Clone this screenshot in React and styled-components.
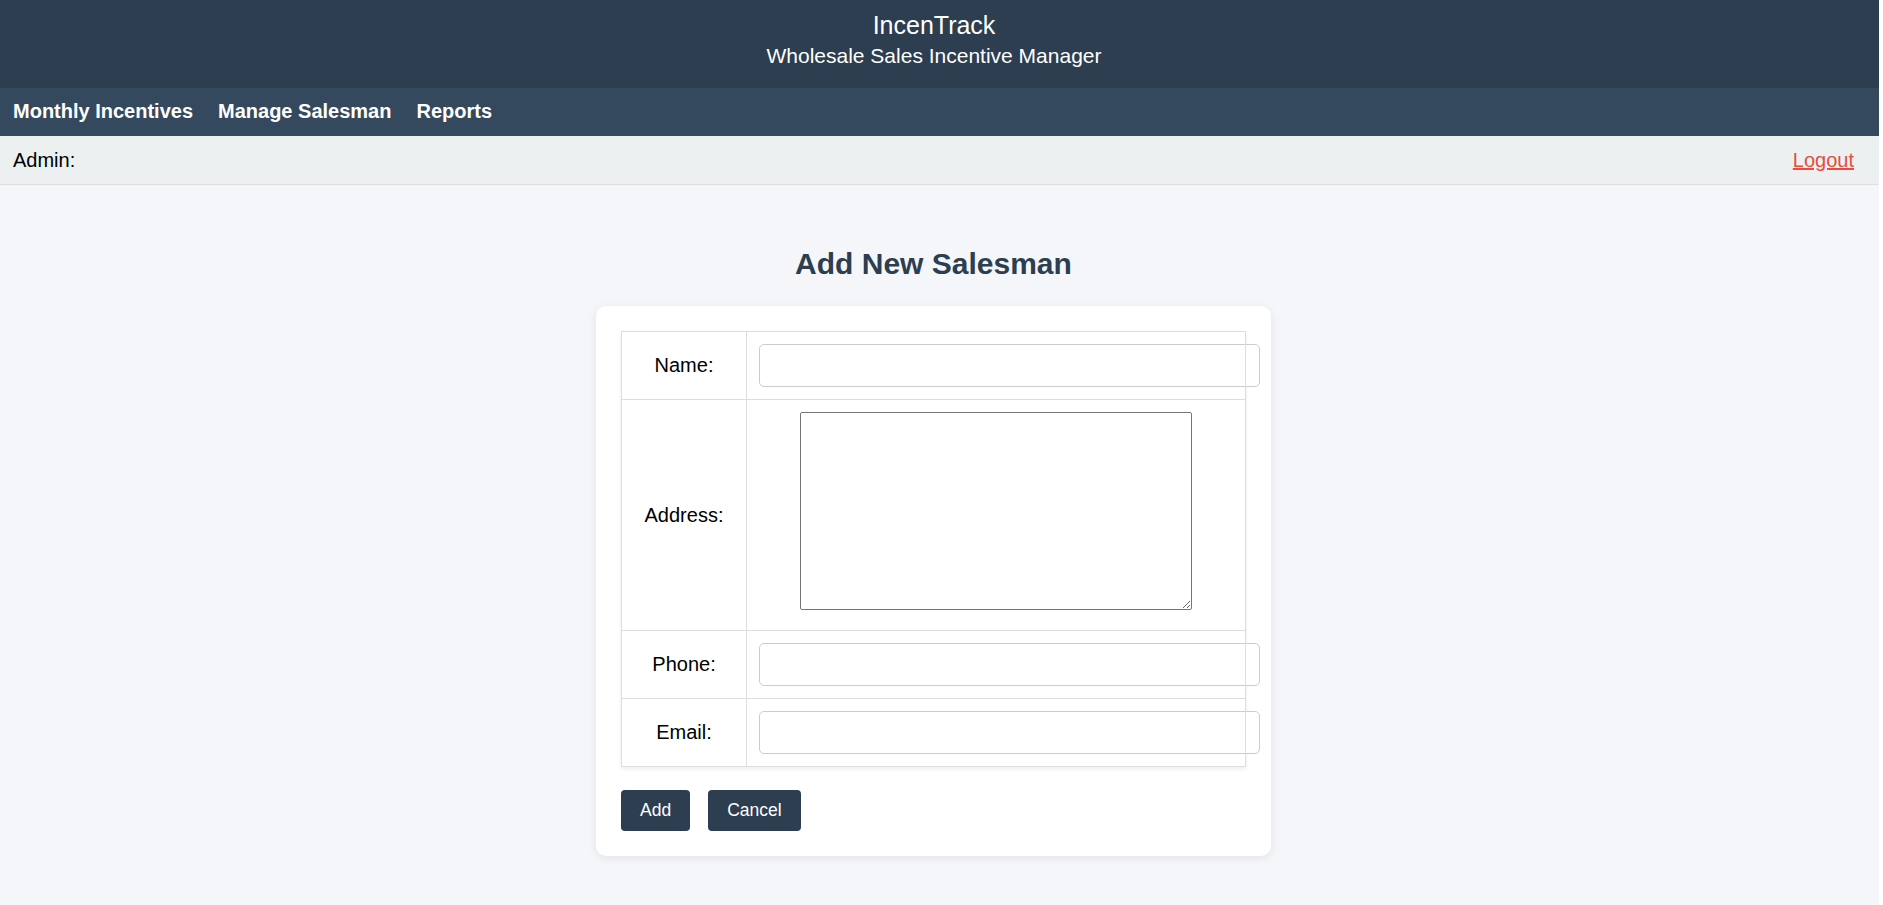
import React from "react";
import styled, { createGlobalStyle } from "styled-components";

const GlobalStyle = createGlobalStyle`
  html, body {
    margin: 0;
    padding: 0;
    background: #ffffff;
  }
  body {
    font-family: "Liberation Sans", Arial, Helvetica, sans-serif;
  }
  * { box-sizing: border-box; }
`;

const Page = styled.div`
  width: calc(100% - 4px);
  min-height: 100vh;
  display: flex;
  flex-direction: column;
  background: #f4f6f9;
`;

const Header = styled.header`
  height: 88px;
  background: #2c3e50;
  color: #ffffff;
  display: flex;
  flex-direction: column;
  align-items: center;
  padding: 11px 11px 0 0;
  gap: 4px;
`;

const AppTitle = styled.h1`
  margin: 0;
  font-size: 25px;
  line-height: 29px;
  font-weight: 400;
`;

const AppSubtitle = styled.div`
  font-size: 21px;
  line-height: 24px;
`;

const Nav = styled.nav`
  height: 48px;
  background: #34495e;
  display: flex;
  align-items: center;
  padding: 0 0 2px 0.5px;
`;

const NavLink = styled.a`
  color: #ffffff;
  font-weight: 700;
  font-size: 20px;
  padding: 0 12.5px;
  text-decoration: none;
  cursor: pointer;
`;

const UserBar = styled.div`
  height: 49px;
  background: #ecf0f1;
  border-bottom: 1px solid #dcdfe1;
  display: flex;
  align-items: center;
  justify-content: space-between;
  padding: 0 25px 0 13px;
  font-size: 20px;
  color: #000;
`;

const Logout = styled.a`
  color: #e74c3c;
  text-decoration: underline;
  cursor: pointer;
`;

const Main = styled.main`
  flex: 1;
  display: flex;
  flex-direction: column;
  align-items: center;
  padding: 62px 12px 40px 0;
`;

const Heading = styled.h2`
  margin: 0 0 25px;
  font-size: 30px;
  line-height: 34px;
  font-weight: 700;
  color: #2c3e50;
`;

const Card = styled.div`
  width: 675px;
  background: #ffffff;
  border-radius: 10px;
  box-shadow: 0 2px 10px rgba(0, 0, 0, 0.08);
  padding: 25px;
`;

const Table = styled.table`
  width: 100%;
  border-collapse: collapse;
  box-shadow: 0 2px 4px rgba(0, 0, 0, 0.07);
`;

const LabelCell = styled.td`
  width: 125px;
  padding: 12px;
  border: 1px solid #dddddd;
  text-align: center;
  vertical-align: middle;
  font-size: 20px;
  color: #000;
`;

const ValueCell = styled.td`
  padding: 12px;
  border: 1px solid #dddddd;
  text-align: left;
  vertical-align: middle;
`;

const TextInput = styled.input`
  box-sizing: content-box;
  display: block;
  width: 100%;
  height: 41px;
  padding: 0 12.5px;
  margin: 0;
  border: 1px solid #cccccc;
  border-radius: 5px;
  font-family: inherit;
  font-size: 18px;
  background: #fff;
  outline: none;
`;

const AddressInput = styled.textarea`
  display: block;
  width: 392px;
  height: 198px;
  margin: 0 auto 8px;
  border: 1px solid #767676;
  border-radius: 2px;
  font-family: inherit;
  font-size: 16px;
  background: #fff;
`;

const ButtonRow = styled.div`
  display: flex;
  gap: 18px;
  margin-top: 23px;
`;

const Button = styled.button`
  height: 41px;
  padding: 0 19px;
  background: #2c3e50;
  color: #ffffff;
  border: none;
  border-radius: 4px;
  font-family: inherit;
  font-size: 17.5px;
  cursor: pointer;
`;

const fields = [
  { label: "Name:", type: "text" },
  { label: "Address:", type: "textarea" },
  { label: "Phone:", type: "text" },
  { label: "Email:", type: "email" },
];

export default function App() {
  return (
    <>
      <GlobalStyle />
      <Page>
        <Header>
          <AppTitle>IncenTrack</AppTitle>
          <AppSubtitle>Wholesale Sales Incentive Manager</AppSubtitle>
        </Header>
        <Nav>
          <NavLink>Monthly Incentives</NavLink>
          <NavLink>Manage Salesman</NavLink>
          <NavLink>Reports</NavLink>
        </Nav>
        <UserBar>
          <span>Admin:</span>
          <Logout>Logout</Logout>
        </UserBar>
        <Main>
          <Heading>Add New Salesman</Heading>
          <Card>
            <Table>
              <tbody>
                {fields.map((f) => (
                  <tr key={f.label}>
                    <LabelCell>{f.label}</LabelCell>
                    <ValueCell>
                      {f.type === "textarea" ? (
                        <AddressInput />
                      ) : (
                        <TextInput type={f.type} />
                      )}
                    </ValueCell>
                  </tr>
                ))}
              </tbody>
            </Table>
            <ButtonRow>
              <Button>Add</Button>
              <Button>Cancel</Button>
            </ButtonRow>
          </Card>
        </Main>
      </Page>
    </>
  );
}
